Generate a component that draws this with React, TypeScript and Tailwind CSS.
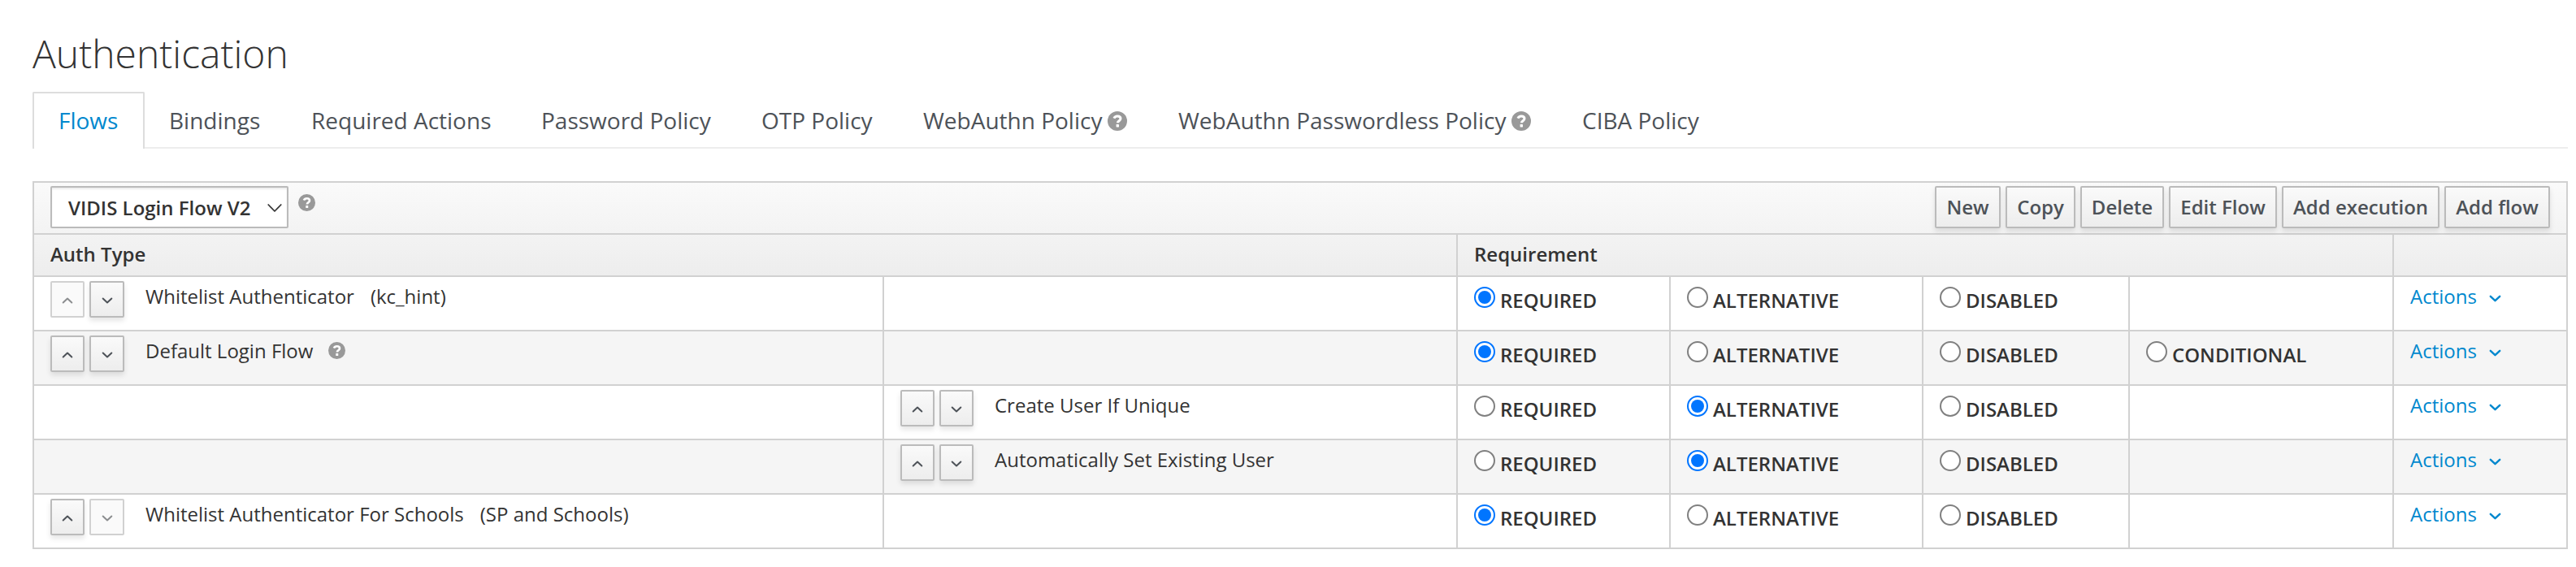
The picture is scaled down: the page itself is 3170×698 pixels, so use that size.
import React from "react";

function HelpIcon({ className }: { className: string }) {
  return (
    <svg viewBox="0 0 24 24" className={`shrink-0 ${className}`} aria-hidden="true">
      <circle cx="12" cy="12" r="12" fill="#999999" />
      <path d="M7.9 8.7C8.7 6.8 10.2 6 12.1 6c2.3 0 3.9 1.2 3.9 3.1 0 2.6-3.6 2.7-3.6 5.2" fill="none" stroke="#fff" strokeWidth="3" />
      <rect x="10.6" y="16" width="3.4" height="3.4" rx="0.4" fill="#fff" />
    </svg>
  );
}

function Chevron({ up = false, className, weight = 2 }: { up?: boolean; className: string; weight?: number }) {
  return (
    <svg viewBox="0 0 14 10" className={`shrink-0 ${className}`} fill="none" stroke="currentColor" strokeWidth={weight} strokeLinecap="round" strokeLinejoin="round" aria-hidden="true">
      <path d={up ? "M1.7 7.5 7 2.5 12.3 7.5" : "M1.7 2.5 7 7.5 12.3 2.5"} />
    </svg>
  );
}

function SelectArrow() {
  return (
    <svg viewBox="0 0 18 10" className="mt-px mr-[6px] ml-auto h-[10px] w-[18px] shrink-0" fill="none" stroke="currentColor" strokeWidth="1.7" strokeLinecap="round" strokeLinejoin="round" aria-hidden="true">
      <path d="M1.2 1 9 9 16.8 1" />
    </svg>
  );
}

const tabs = [
  { label: "Bindings", width: "w-[175px]" },
  { label: "Required Actions", width: "w-[283px]" },
  { label: "Password Policy", width: "w-[271px]" },
  { label: "OTP Policy", width: "w-[199px]" },
  { label: "WebAuthn Policy", width: "w-[314px]", help: true },
  { label: "WebAuthn Passwordless Policy", width: "w-[497px]", help: true },
  { label: "CIBA Policy", width: "w-[200px]" },
];

const toolbar = [
  { label: "New", width: "w-[81px]" },
  { label: "Copy", width: "w-[86px]" },
  { label: "Delete", width: "w-[103px]" },
  { label: "Edit Flow", width: "w-[133px]" },
  { label: "Add execution", width: "w-[194px]" },
  { label: "Add flow", width: "w-[130px]" },
];

type Flow = {
  name: string;
  alias?: string;
  help?: boolean;
  nested?: boolean;
  first?: boolean;
  last?: boolean;
  value: string;
  conditional?: boolean;
};

const flows: Flow[] = [
  { name: "Whitelist Authenticator", alias: "(kc_hint)", first: true, value: "REQUIRED" },
  { name: "Default Login Flow", help: true, value: "REQUIRED", conditional: true },
  { name: "Create User If Unique", nested: true, value: "ALTERNATIVE" },
  { name: "Automatically Set Existing User", nested: true, value: "ALTERNATIVE" },
  { name: "Whitelist Authenticator For Schools", alias: "(SP and Schools)", last: true, value: "REQUIRED" },
];

function MoveButton({ up = false, disabled = false, wide = false }: { up?: boolean; disabled?: boolean; wide?: boolean }) {
  return (
    <button
      disabled={disabled}
      className={`flex h-[45px] items-center justify-center rounded-[2px] border-2 ${wide ? "w-[43px]" : "w-[42px]"} ${
        disabled
          ? "border-[#d1d1d1] bg-[#fafafa] text-[#8b8d8f]"
          : "border-[#bbbbbb] bg-linear-to-b from-[#fafafa] to-[#ededed] text-[#4d5258] shadow-[0_4px_6px_rgba(3,3,3,0.1)]"
      }`}
    >
      <Chevron up={up} className={up ? "mt-[3px] h-[10px] w-[14px]" : "mt-[2px] h-[10px] w-[14px]"} />
    </button>
  );
}

function FlowName({ flow }: { flow: Flow }) {
  return (
    <div className="flex items-start gap-[6px] pt-[5px] pl-[20px]">
      <MoveButton up disabled={flow.first} />
      <MoveButton disabled={flow.last} wide={!flow.nested} />
      <div className="flex items-start pl-[20px] leading-[38px] whitespace-nowrap">
        <span>{flow.name}</span>
        {flow.alias && <span className="ml-[20px]">{flow.alias}</span>}
        {flow.help && <HelpIcon className="mt-[8px] ml-[19px] size-[21px]" />}
      </div>
    </div>
  );
}

function Radio({ label, checked }: { label: string; checked: boolean }) {
  return (
    <label className="flex items-start pl-[20px] font-semibold">
      <span
        className={`mt-[12px] flex size-[26px] shrink-0 items-center justify-center rounded-full border-2 bg-white ${
          checked ? "border-[#0075ff]" : "border-[#808080]"
        }`}
      >
        {checked && <span className="size-[16px] rounded-full bg-[#0075ff]" />}
      </span>
      <span className="mt-[10px] ml-[6px] leading-[38px]">{label}</span>
    </label>
  );
}

const cell = "border-r-2 border-[#d1d1d1]";
const columns = "grid grid-cols-[1046px_706px_262px_311px_254px_325px_214px]";

export default function App() {
  return (
    <div className="h-[698px] w-[3170px] overflow-hidden bg-white pl-[40px] font-['Open_Sans',sans-serif] text-[24px] text-[#333333]">
      <h1 className="h-[113px] pt-[34px] text-[48px] leading-[64px] font-light">Authentication</h1>

      <nav className="flex h-[70px] w-[3120px] text-[28px] leading-[38px] text-[#4d5258]">
        <div className="h-[70px] w-[138px] rounded-t-[2px] border-2 border-b-0 border-[#dddddd] pt-[14px] pl-[30px] text-[#0088ce]">Flows</div>
        <div className="flex flex-1 border-b-2 border-[#ededed] pt-[16px] pl-[30px]">
          {tabs.map((tab) => (
            <div key={tab.label} className={`flex whitespace-nowrap ${tab.width}`}>
              {tab.label}
              {tab.help && <HelpIcon className="mt-[8px] ml-[7px] size-[24px]" />}
            </div>
          ))}
        </div>
      </nav>

      <div className="mt-[40px] w-[3120px] border-2 border-r-0 border-b-0 border-[#d1d1d1]">
        <div className="bg-linear-to-b from-[#fafafa] to-[#ededed]">
          <div className="flex h-[64px] justify-between border-r-2 border-b-2 border-[#d1d1d1] pt-[4px] pr-[20px] pl-[20px]">
            <div className="flex items-start">
              <div className="flex h-[52px] w-[293px] items-center rounded-[2px] border-2 border-[#bbbbbb] bg-white pl-[20px] font-semibold shadow-[inset_0_2px_2px_rgba(3,3,3,0.075)]">
                <span className="pt-px whitespace-nowrap">VIDIS Login Flow V2</span>
                <SelectArrow />
              </div>
              <HelpIcon className="mt-[10px] ml-[12px] size-[21px]" />
            </div>
            <div className="flex gap-[6px]">
              {toolbar.map((button) => (
                <button
                  key={button.label}
                  className={`h-[52px] rounded-[2px] border-2 border-[#bbbbbb] bg-linear-to-b from-[#fafafa] to-[#ededed] pb-px font-semibold whitespace-nowrap text-[#4d5258] shadow-[0_4px_6px_rgba(3,3,3,0.1)] ${button.width}`}
                >
                  {button.label}
                </button>
              ))}
            </div>
          </div>
          <div className="grid h-[52px] grid-cols-[1752px_1152px_214px] border-b-2 border-[#d1d1d1] leading-[48px] font-semibold">
            <div className={`pl-[20px] ${cell}`}>Auth Type</div>
            <div className={`pl-[20px] ${cell}`}>Requirement</div>
            <div className={cell} />
          </div>
        </div>

        {flows.map((flow) => (
          <div key={flow.name} className={`h-[67px] border-b-2 border-[#d1d1d1] even:bg-white odd:bg-[#f5f5f5] ${columns}`}>
            <div className={cell}>{!flow.nested && <FlowName flow={flow} />}</div>
            <div className={cell}>{flow.nested && <FlowName flow={flow} />}</div>
            {["REQUIRED", "ALTERNATIVE", "DISABLED"].map((option) => (
              <div key={option} className={cell}>
                <Radio label={option} checked={flow.value === option} />
              </div>
            ))}
            <div className={cell}>{flow.conditional && <Radio label="CONDITIONAL" checked={false} />}</div>
            <div className={`flex items-start pt-[5px] pl-[20px] text-[#0088ce] ${cell}`}>
              <span className="leading-[38px]">Actions</span>
              <Chevron className="mt-[16px] ml-[15px] h-[11px] w-[15px]" weight={2.3} />
            </div>
          </div>
        ))}
      </div>
    </div>
  );
}
